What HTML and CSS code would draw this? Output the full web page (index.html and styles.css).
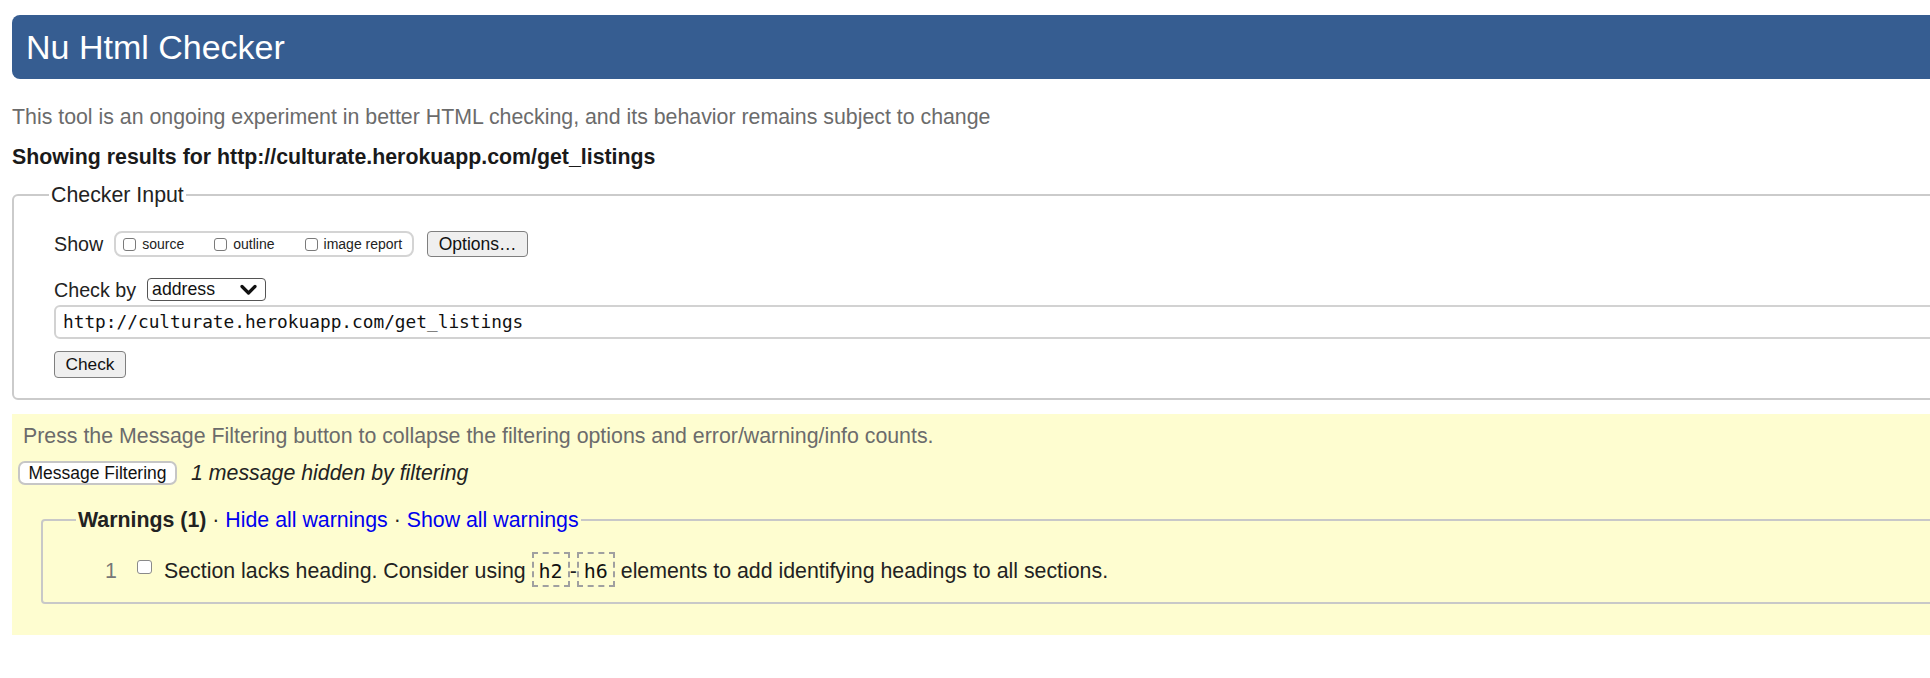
FILE: index.html
```html
<!DOCTYPE html>
<html lang="en">
<head>
<meta charset="utf-8">
<title>Nu Html Checker</title>
<link rel="stylesheet" href="styles.css">
</head>
<body>
<div class="page">
  <h1 class="banner">Nu Html Checker</h1>
  <p class="intro">This tool is an ongoing experiment in better HTML checking, and its behavior remains subject to change</p>
  <p class="results">Showing results for http://culturate.herokuapp.com/get_listings</p>

  <fieldset class="checker">
    <legend class="checker-legend">Checker Input</legend>
    <div class="show-row">
      <span class="label">Show</span>
      <span class="group">
        <span class="opt"><span class="cb"></span>source</span>
        <span class="opt"><span class="cb"></span>outline</span>
        <span class="opt last"><span class="cb"></span>image report</span>
      </span>
      <span class="btn options">Options…</span>
    </div>
    <div class="checkby-row">
      <span class="label">Check by</span>
      <span class="select">address
        <svg class="chev" width="17" height="12" viewBox="0 0 17 12"><polyline points="2,2.5 8.5,9 15,2.5" fill="none" stroke="#111" stroke-width="3.2" stroke-linecap="round" stroke-linejoin="round"/></svg>
      </span>
    </div>
    <div class="url">http://culturate.herokuapp.com/get_listings</div>
    <span class="btn check">Check</span>
  </fieldset>

  <div class="filters">
    <p class="press">Press the Message Filtering button to collapse the filtering options and error/warning/info counts.</p>
    <div class="mf-row">
      <span class="mf-btn">Message Filtering</span>
      <em class="hidden-note">1 message hidden by filtering</em>
    </div>
    <fieldset class="warnings">
      <legend class="warn-legend"><strong>Warnings (1)</strong> · <a class="lnk" href="#">Hide all warnings</a> · <a class="lnk" href="#">Show all warnings</a></legend>
      <div class="msg"><span class="num">1</span><span class="cb big"></span><span class="msg-text">Section lacks heading. Consider using <code class="code">h2</code>-<code class="code">h6</code> elements to add identifying headings to all sections.</span></div>
    </fieldset>
  </div>
</div>
</body>
</html>
```

FILE: styles.css
```css
html, body {
  margin: 0;
  padding: 0;
  overflow: hidden;
  background: #fff;
}
body {
  font-family: "Liberation Sans", Arial, Helvetica, sans-serif;
  font-size: 21.33px;
  color: #222;
}
.page {
  width: 2300px;
  padding: 15px 0 0 12px;
}
.banner {
  margin: 0;
  height: 64px;
  background: #365d91;
  color: #fff;
  border-radius: 8px 0 0 8px;
  font-size: 34px;
  font-weight: normal;
  line-height: 64px;
  padding-left: 14px;
}
.intro {
  margin: 26px 0 0;
  line-height: 24px;
  color: #6b6b6b;
}
.results {
  margin: 16px 0 0;
  line-height: 24px;
  font-weight: bold;
  color: #1a1a1a;
}
.checker {
  margin: 14px 0 0 0;
  border: 2px solid #cbcbcb;
  border-radius: 6px;
  padding: 0 0 20px 40px;
}
.checker-legend {
  padding: 0 2px;
  margin-left: -5px;
  line-height: 24px;
  color: #222;
}
.show-row {
  display: flex;
  align-items: center;
  height: 26px;
  margin-top: 24px;
  font-size: 19.7px;
}
.label {
  line-height: 26px;
}
.group {
  display: flex;
  align-items: center;
  box-sizing: border-box;
  height: 26px;
  margin-left: 11px;
  border: 2px solid #d4d4d4;
  border-radius: 8px;
  padding: 0 10px 0 7px;
  font-size: 14px;
}
.opt {
  display: flex;
  align-items: center;
  margin-right: 30px;
}
.opt.last {
  margin-right: 0;
}
.cb {
  display: inline-block;
  box-sizing: border-box;
  width: 13px;
  height: 13px;
  border: 1px solid #7a7a7a;
  border-radius: 3px;
  background: #fff;
  margin-right: 6px;
}
.btn {
  display: inline-flex;
  align-items: center;
  justify-content: center;
  box-sizing: border-box;
  background: #efefef;
  border: 1px solid #7f7f7f;
  border-radius: 4px;
  color: #111;
}
.options {
  margin-left: 13px;
  width: 101px;
  height: 26px;
  font-size: 17.5px;
}
.checkby-row {
  display: flex;
  align-items: center;
  height: 23px;
  margin-top: 21px;
  font-size: 19.7px;
}
.select {
  display: flex;
  align-items: center;
  box-sizing: border-box;
  margin-left: 11px;
  width: 119px;
  height: 23px;
  border: 1px solid #555;
  border-radius: 4px;
  padding-left: 4px;
  font-size: 17.7px;
  color: #111;
}
.chev {
  margin-left: auto;
  margin-right: 8px;
}
.url {
  box-sizing: border-box;
  margin-top: 4px;
  height: 34px;
  width: 2200px;
  border: 2px solid #d2d2d2;
  border-radius: 6px;
  padding-left: 7px;
  font-family: "DejaVu Sans Mono", Menlo, monospace;
  font-size: 17.8px;
  line-height: 30px;
  color: #111;
}
.check {
  margin-top: 12px;
  width: 72px;
  height: 27px;
  font-size: 17.3px;
}
.filters {
  margin-top: 14px;
  background: #fefdd0;
  padding: 10px 0 31px 0;
}
.press {
  margin: 0;
  padding-left: 11px;
  line-height: 24px;
  color: #6b6b6b;
}
.mf-row {
  display: flex;
  align-items: center;
  margin-top: 13px;
  height: 24px;
}
.mf-btn {
  display: inline-flex;
  align-items: center;
  justify-content: center;
  box-sizing: border-box;
  margin-left: 6px;
  width: 159px;
  height: 24px;
  background: #fff;
  border: 2px solid #c6c6c6;
  border-radius: 7px;
  font-size: 17.5px;
  color: #111;
}
.hidden-note {
  margin-left: 14px;
  line-height: 24px;
  color: #222;
}
.warnings {
  margin: 23px 0 0 29px;
  border: 2px solid #c8c8c8;
  border-radius: 4px;
  padding: 0 0 15px 33px;
}
.warn-legend {
  padding: 0 2px;
  line-height: 24px;
  color: #222;
}
.lnk {
  color: #0000ee;
  text-decoration: none;
}
.msg {
  margin-top: 20px;
  padding-left: 29px;
  line-height: 24px;
}
.num {
  display: inline-block;
  width: 32px;
  color: #777;
}
.cb.big {
  width: 15px;
  height: 14px;
  border-color: #8a8a8a;
  margin-right: 12px;
  vertical-align: 4px;
}
.code {
  display: inline-block;
  font-family: "DejaVu Sans Mono", Menlo, monospace;
  font-size: 20px;
  line-height: 22px;
  padding: 5.5px 5px 3.5px;
  border: 2px dashed #a0a0a0;
  color: #111;
}
```
